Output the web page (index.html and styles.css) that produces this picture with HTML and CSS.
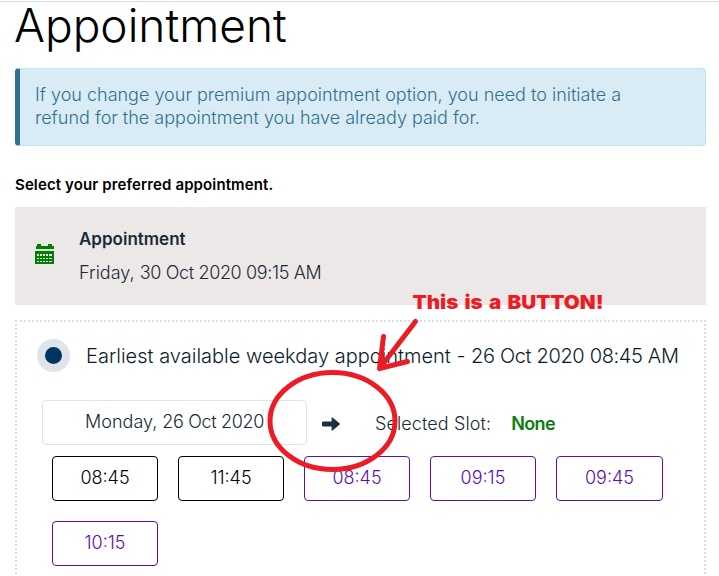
FILE: index.html
```html
<!DOCTYPE html>
<html lang="en">
  <head>
    <meta charset="UTF-8" />
    <meta name="viewport" content="width=device-width, initial-scale=1.0" />
    <title>Appointment</title>
    <link rel="stylesheet" href="styles.css">
  </head>
  <body>
    <main class="page">
      <h1>Appointment</h1>
      <div class="alert">
        If you change your premium appointment option, you need to initiate a
        <br />
        refund for the appointment you have already paid for.
      </div>
      <p class="hint">Select your preferred appointment.</p>

      <section class="current">
        <svg class="calendar" viewBox="0 0 19 20" width="19" height="20" shape-rendering="crispEdges">
          <path fill="#008000" fill-rule="evenodd" d="M1 2h1V0h4v2h7V0h4v2h2v3H1z M0 7h19v13H0z M2 10v2h2v-2z M5 10v2h2v-2z M8 10v2h2v-2z M11 10v2h2v-2z M14 10v2h3v-2z M2 14v1h2v-1z M5 14v1h2v-1z M8 14v1h2v-1z M11 14v1h2v-1z M14 14v1h3v-1z M2 17v1h2v-1z M5 17v1h2v-1z M8 17v1h2v-1z M11 17v1h2v-1z M14 17v1h3v-1z" />
        </svg>
        <div class="current-text">
          <strong>Appointment</strong>
          <span class="current-date">Friday, <span class="date">30 Oct 2020 09:15 AM</span></span>
        </div>
      </section>

      <section class="option">
        <label class="option-head">
          <span class="radio"></span>
          <span class="option-title">Earliest available weekday appointment - <span class="date">26 Oct 2020 08:45 AM</span></span>
        </label>
        <div class="day-row">
          <div class="day">Monday, <span class="date">26 Oct 2020</span></div>
          <button class="next" type="button" aria-label="Next day">
            <svg viewBox="0 0 18 14" width="18" height="14">
              <path fill="#1b303f" d="M1 4.400h8.600V1.200q0-1 .9-.6l7 5.700q.6.700 0 1.400l-7 5.700q-.9.400-.9-.6V9.400H1q-1 0-1-1v-3q0-1 1-1z" />
            </svg>
          </button>
          <span class="slot-label">Selected Slot:</span>
          <span class="slot-value">None</span>
        </div>
        <div class="slots">
          <button class="slot" type="button">08:45</button>
          <button class="slot" type="button">11:45</button>
          <button class="slot premium" type="button">08:45</button>
          <button class="slot premium" type="button">09:15</button>
          <button class="slot premium" type="button">09:45</button>
          <button class="slot premium" type="button">10:15</button>
        </div>
      </section>
    </main>

    <!-- hand-drawn note pointing at the next-day button -->
    <svg class="note" viewBox="0 0 719 576" width="719" height="576">
      <ellipse cx="332.500" cy="421" rx="62.500" ry="48.500" />
      <path d="M415.500 321.500L379.500 368.500M383.500 336.500L379.500 368.500L407.500 361.500" />
      <text class="note-text" x="412.500" y="309" textLength="191" lengthAdjust="spacingAndGlyphs">This is a BUTTON!</text>
    </svg>
  </body>
</html>
```
FILE: styles.css
```css
* {
  box-sizing: border-box;
}

body {
  margin: 0;
  background: #fff;
  color: #1b2a38;
  font-family: Inter, "Liberation Sans", sans-serif;
  font-size: 18px;
  font-weight: 300;
}

.page {
  padding: 1px 13px 0 15px;
  background: linear-gradient(#d9dcdc, #d9dcdc) 0 1px / 100% 1px no-repeat;
}

h1 {
  height: 67px;
  margin: 0 0 0 -1px;
  color: #000;
  font-size: 46px;
  font-weight: 300;
  line-height: 48px;
}

.alert {
  height: 78px;
  padding: 14px 15px 0 15px;
  border: 1px solid #bee5eb;
  border-left: 5px solid #2f7290;
  border-radius: 4px;
  background: #d9ecf5;
  color: #31708f;
  line-height: 23px;
  white-space: nowrap;
}

.hint {
  margin: 27px 0 11px;
  line-height: 23px;
  color: #000;
  font-size: 15px;
  font-weight: 600;
  letter-spacing: 0.12px;
}

.current {
  display: flex;
  height: 98px;
  padding-left: 20px;
  background: #ece8e7;
}

.calendar {
  margin-top: 37px;
}

.current-text {
  display: flex;
  flex-direction: column;
  margin-left: 25px;
  padding-top: 16px;
  line-height: 33px;
}

.current-text strong {
  font-size: 17px;
  font-weight: 600;
}

.date {
  letter-spacing: -0.35px;
}

.option {
  height: 254px;
  margin-top: 15px;
  padding: 17px 18px 0 20px;
  border: 2px dotted #dedede;
  border-bottom: 0;
}

.option-head {
  display: flex;
  align-items: center;
  height: 33px;
  color: #0b1c2c;
  font-size: 20px;
  white-space: nowrap;
}

.radio {
  width: 33px;
  height: 33px;
  border: 8px solid #dfe4eb;
  border-radius: 50%;
  background: #00355f;
}

.option-title {
  margin-left: 16px;
}

.day-row {
  display: flex;
  align-items: center;
  height: 45px;
  margin-top: 28px;
  padding-left: 5px;
  white-space: nowrap;
}

.day {
  width: 265px;
  height: 45px;
  border: 1px solid #dfe3ea;
  border-radius: 4px;
  line-height: 42px;
  text-align: center;
}

.next {
  display: flex;
  margin: 3px 0 0 15px;
  padding: 0;
  border: 0;
  background: none;
  cursor: pointer;
}

.slot-label {
  margin: 1px 0 0 35px;
  letter-spacing: 0.1px;
}

.slot-value {
  margin: 1px 0 0 20px;
  color: #0a7d0a;
  font-weight: 600;
  letter-spacing: -0.6px;
}

.slots {
  display: grid;
  grid-template-columns: repeat(4, 106px) 107px;
  gap: 20px;
  margin: 11px 0 0 15px;
}

.slot {
  height: 45px;
  padding: 0 0 2px;
  border: 1px solid #000;
  border-radius: 4px;
  background: #fff;
  color: #000;
  font: inherit;
  cursor: pointer;
}

.premium {
  border-color: #5c0eae;
  color: #5c0eae;
}

.note {
  position: absolute;
  top: 0;
  left: 0;
  fill: none;
  stroke: #ed1c24;
  stroke-width: 5;
  stroke-linecap: round;
  stroke-linejoin: round;
  pointer-events: none;
}

.note-text {
  fill: #ed1c24;
  stroke: none;
  font-size: 19px;
  font-weight: 900;
  word-spacing: 2px;
}
```
